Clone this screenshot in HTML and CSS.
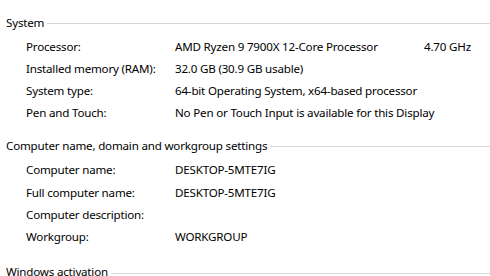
FILE: index.html
```html
<!DOCTYPE html>
<html>
<head>
<meta charset="utf-8">
<link rel="stylesheet" href="styles.css">
</head>
<body>
<div class="panel">
  <section class="group group-system">
    <div class="group-head"><span class="group-title">System</span><span class="group-rule"></span></div>
    <div class="rows">
      <div class="label">Processor:</div><div class="value">AMD Ryzen 9 7900X 12-Core Processor</div><div class="extra">4.70 GHz</div>
      <div class="label">Installed memory (RAM):</div><div class="value">32.0 GB (30.9 GB usable)</div><div class="extra"></div>
      <div class="label">System type:</div><div class="value">64-bit Operating System, x64-based processor</div><div class="extra"></div>
      <div class="label">Pen and Touch:</div><div class="value wide">No Pen or Touch Input is available for this Display</div>
    </div>
  </section>
  <section class="group group-name">
    <div class="group-head"><span class="group-title">Computer name, domain and workgroup settings</span><span class="group-rule"></span></div>
    <div class="rows">
      <div class="label">Computer name:</div><div class="value">DESKTOP-5MTE7IG</div><div class="extra"></div>
      <div class="label">Full computer name:</div><div class="value">DESKTOP-5MTE7IG</div><div class="extra"></div>
      <div class="label">Computer description:</div><div class="value"></div><div class="extra"></div>
      <div class="label">Workgroup:</div><div class="value">WORKGROUP</div><div class="extra"></div>
    </div>
  </section>
  <section class="group group-activation">
    <div class="group-head group-head-last"><span class="group-title">Windows activation</span><span class="group-rule"></span></div>
  </section>
</div>
</body>
</html>
```
FILE: styles.css
```css
html, body {
  margin: 0;
  padding: 0;
  background: #ffffff;
}
body {
  font-family: "Noto Sans", "Open Sans", sans-serif;
  font-size: 11.6px;
  letter-spacing: -0.2px;
  color: #000000;
  width: 490px;
  height: 276px;
  overflow: hidden;
}
.panel {
  padding-top: 12px;
}
.group-head {
  display: flex;
  align-items: center;
  height: 22px;
  padding-left: 6px;
}
.group-title {
  white-space: nowrap;
  line-height: 22px;
}
.group-rule {
  flex: 1;
  height: 1px;
  background: #d5d5d5;
  margin-left: 3px;
  margin-top: 1px;
}
.rows {
  display: grid;
  grid-template-columns: 149px 249px auto;
  grid-auto-rows: 22px;
  padding-left: 26px;
  margin-top: 2px;
  align-items: center;
}
.label, .value, .extra {
  white-space: nowrap;
  line-height: 22px;
  height: 22px;
}
.value.wide {
  grid-column: 2 / 4;
}
.group-system {
  padding-bottom: 11px;
}
.group-name {
  padding-bottom: 14px;
}
.group-name .rows {
  grid-auto-rows: 22.4px;
}
.group-head-last {
  height: 16px;
  align-items: flex-end;
}
.group-head-last .group-title {
  line-height: 14px;
}
.group-head-last .group-rule {
  margin-bottom: 5px;
}
```
